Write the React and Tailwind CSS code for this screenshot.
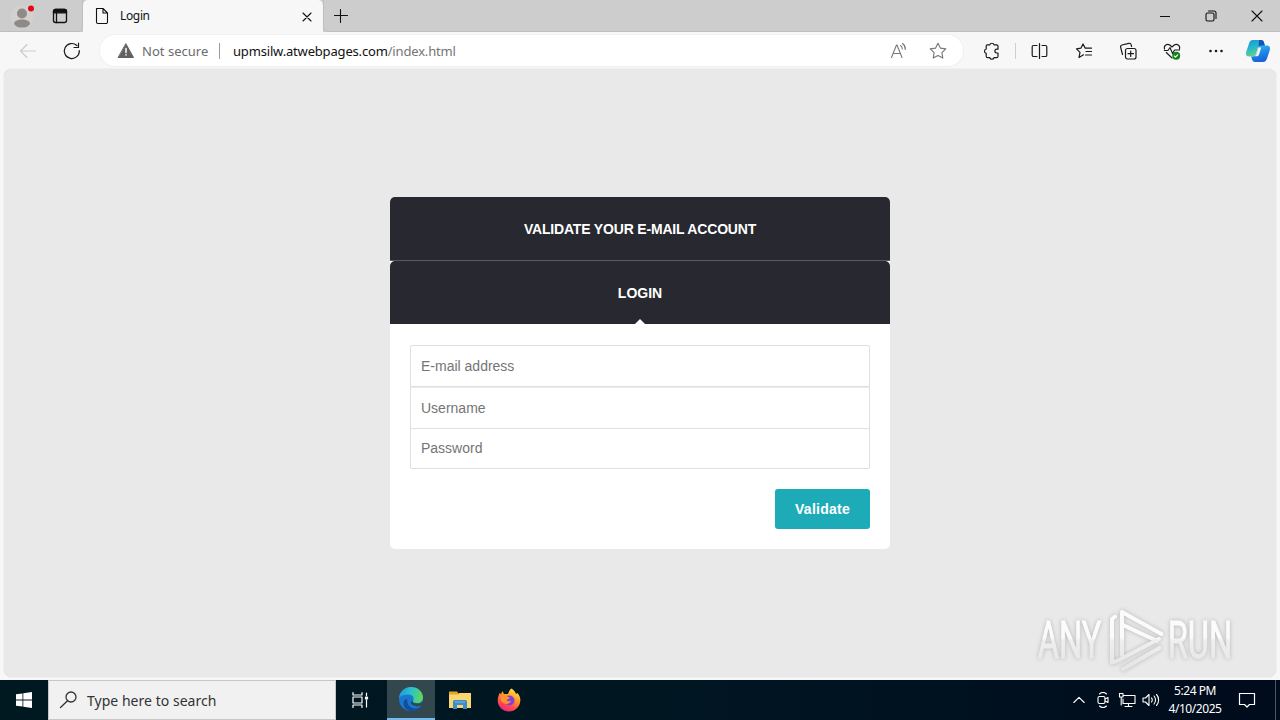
const Icon = ({ size = 20, box = 20, sw = 1.1, className = '', children }) => (
  <svg
    width={size}
    height={size}
    viewBox={`0 0 ${box} ${box}`}
    fill="none"
    stroke="currentColor"
    strokeWidth={sw}
    strokeLinecap="round"
    strokeLinejoin="round"
    className={`shrink-0 ${className}`}
  >
    {children}
  </svg>
);

const TabBar = () => (
  <div className="flex h-8 bg-[#cdcdcd] text-[#111]">
    <div className="flex w-[83px] items-center rounded-br-[5px] border-r border-b border-[#bebebe] pl-[10px]">
      <Icon size={26} box={26}>
        <circle cx="12" cy="14" r="11.5" fill="#d3d0ce" stroke="none" />
        <circle cx="12" cy="10.500" r="5" fill="#8d8a88" stroke="none" />
        <path d="M4 21c0-3 3.500-4.500 8-4.500s8 1.500 8 4.500c-2 3-4.500 3.500-8 3.500s-6-.5-8-3.500z" fill="#8d8a88" stroke="none" />
        <circle cx="21" cy="5.500" r="3" fill="#e30613" stroke="none" />
      </Icon>
      <Icon className="ml-[14px]" sw={1.3}>
        <rect x="3.500" y="3.500" width="13" height="13" rx="2" />
        <path d="M3.500 5.500a2 2 0 0 1 2-2h9a2 2 0 0 1 2 2v1.300h-13z" fill="currentColor" />
        <path d="M6.500 7v9.500" />
      </Icon>
    </div>
    <div className="flex w-60 items-center rounded-t-[5px] bg-[#f7f7f7] pl-[9px]">
      <Icon size={20}>
        <path d="M4.500 2.500h6.500l4.500 4.500v9a1.500 1.500 0 0 1-1.500 1.500H6A1.500 1.500 0 0 1 4.500 16zM11 2.500V7h4.500" />
      </Icon>
      <span className="ml-2 text-[12px] leading-4 tracking-[-0.350px]">Login</span>
      <Icon size={10} box={10} className="mt-px mr-[11px] ml-auto">
        <path d="M1 1l8 8M9 1L1 9" />
      </Icon>
    </div>
    <div className="flex flex-1 items-center rounded-bl-[5px] border-b border-l border-[#bebebe] pl-[10px]">
      <Icon size={14} box={14}>
        <path d="M6.500 .5v13M.5 6.500h13" />
      </Icon>
      <div className="ml-auto flex">
        <div className="flex w-[46px] items-center justify-center">
          <Icon size={10} box={10}>
            <path d="M0 5.500h10" />
          </Icon>
        </div>
        <div className="flex w-[46px] items-center justify-center">
          <Icon size={12} box={12}>
            <rect x="1" y="3" width="8" height="8" rx="1.500" />
            <path d="M3.500 1h5.500a2 2 0 0 1 2 2v5.500" />
          </Icon>
        </div>
        <div className="flex w-[46px] items-center justify-center">
          <Icon size={12} box={12}>
            <path d="M1 1l10 10M11 1L1 11" />
          </Icon>
        </div>
      </div>
    </div>
  </div>
);

const CopilotLogo = () => (
  <svg width="26" height="24" viewBox="0 0 26 24" className="shrink-0">
    <defs>
      <linearGradient id="cpA" x1="0" y1="0" x2="0.400" y2="1">
        <stop offset="0" stopColor="#1b8fd8" />
        <stop offset="0.500" stopColor="#25b8ca" />
        <stop offset="1" stopColor="#6bd08c" />
      </linearGradient>
      <linearGradient id="cpB" x1="0" y1="0" x2="0.300" y2="1">
        <stop offset="0" stopColor="#35c4f2" />
        <stop offset="0.500" stopColor="#1f8ce8" />
        <stop offset="1" stopColor="#1764dc" />
      </linearGradient>
    </defs>
    <path d="M8 1h8c2 0 2.600 1.200 3.200 3.200L20 7h-4c-2 0-2.800.8-3.400 2.800L11 15c-.6 1.600-1.600 2.500-3.500 2.500H4C1.500 17.500.5 16 1.200 13L4 4.500C4.800 2 6 1 8 1z" fill="url(#cpA)" />
    <path d="M18 23h-8c-2 0-2.600-1.200-3.200-3.200L6.200 17.500H8c2 0 3-1 3.500-2.700L13.200 9c.6-1.600 1.600-2.500 3.300-2.500H22c2.500 0 3.500 1.500 2.800 4.500L22 19.500c-.8 2.500-2 3.500-4 3.500z" fill="url(#cpB)" />
    <path d="M14 1h2c2 0 2.600 1.200 3.200 3.200l.7 2.300h-3.400c-1.700 0-2.500.8-3 2z" fill="#1557b8" />
    <path d="M13.500 8.500h2.700l-2 6.500c-.5 1.700-1 2.300-3 2.300H9.800c1-.5 1.500-1.500 1.900-2.800z" fill="#f7f7f7" />
  </svg>
);

const Toolbar = () => (
  <div className="flex h-[37px] items-center bg-[#f7f7f7] pl-[18px] text-[#1a1a1a]">
    <Icon className="text-[#cbcbcb]">
      <path d="M2.500 10h15M9 3.500L2.500 10 9 16.500" />
    </Icon>
    <Icon className="ml-6" sw={1.2}>
      <path d="M17.300 9.500a7.500 7.500 0 1 1-2.400-5M16.500 2v4.500H12" />
    </Icon>
    <div className="ml-[18px] flex h-[31px] w-[863px] items-center rounded-full bg-white pl-[17px] shadow-[0_0_0_1px_#f0f0f0]">
      <Icon size={18} box={18} sw={1}>
        <path d="M9 2l7.500 13.500h-15z" fill="#616161" stroke="#616161" />
        <path d="M9 6.500v4M9 12.700v.3" stroke="#fff" strokeWidth="1.500" />
      </Icon>
      <span className="mt-0.5 ml-[7px] w-[77px] text-[13px] tracking-[0.020px] whitespace-nowrap text-[#6b6b6b]">Not secure</span>
      <span className="h-4 w-px bg-[#9a9a9a]" />
      <span className="mt-0.5 ml-[13px] text-[13px] tracking-[-0.170px] whitespace-nowrap text-[#111]">
        upmsilw.atwebpages.com<span className="text-[#757575]">/index.html</span>
      </span>
      <Icon className="mr-px ml-auto text-[#7a7a7a]">
        <path d="M3.500 16.500L8.500 4h.5l5 12.500M5.300 12.500h7M12.500 4.500c1.200.8 1.800 2 1.800 3.500M14.500 2.500c2 1.500 3 3.500 2.800 6" />
      </Icon>
      <Icon className="mr-[15px] ml-[19px] text-[#777]">
        <path d="M10 2.200l2.400 4.900 5.400.8-3.900 3.800.9 5.400-4.800-2.600-4.800 2.600.9-5.400-3.900-3.800 5.400-.8z" />
      </Icon>
    </div>
    <Icon className="ml-[19px]" sw={1.2}>
      <path d="M5.200 3.800h2.600a2.200 2.200 0 0 1 4.200 0h2.500a1.500 1.500 0 0 1 1.500 1.500v2.900h-1.200a1.900 1.900 0 0 0 0 3.800h1.200v3.200a1.500 1.500 0 0 1-1.500 1.500h-2.500a2.200 2.200 0 0 1-4.200 0H5.700a1.500 1.500 0 0 1-1.500-1.500v-2.900a2.200 2.200 0 0 1 0-4.300V5.300a1.500 1.500 0 0 1 1-1.500z" />
    </Icon>
    <span className="ml-[13px] h-4 w-px bg-[#cfcfcf]" />
    <Icon className="ml-[14px]" sw={1.2}>
      <path d="M7 4.500H3.500A1.300 1.300 0 0 0 2.200 5.800v8.400A1.300 1.300 0 0 0 3.500 15.500H7M12 4.500h3.500a1.300 1.300 0 0 1 1.300 1.300v8.400a1.300 1.300 0 0 1-1.300 1.300H12M9.500 2.500v15" />
    </Icon>
    <Icon className="ml-[24px]" sw={1.2}>
      <path d="M9.500 13.800L5 16.500l1-5.200L2.500 7.800l4.500-.7L9 3l2.200 4.100h6.300M12 10.500h5.500M11.500 14h6" />
    </Icon>
    <Icon className="ml-6" sw={1.2}>
      <path d="M4.500 13.500L2.600 6.200a1.800 1.800 0 0 1 1.300-2.200l7-1.700a1.800 1.800 0 0 1 2.200 1.400l.5 1.800" />
      <rect x="7.500" y="7.500" width="10.500" height="10.500" rx="2" />
      <path d="M12.700 10v5.500M10 12.700h5.500" />
    </Icon>
    <Icon className="ml-6" sw={1.1}>
      <path d="M2.500 8C1.500 4.500 5 2.300 7.800 4L10 6l2.200-2C15 2.300 18.500 4.500 17.500 8M2.300 9.500H6l2-3 2.500 6 2-3.500h5M4.300 11.500L10 17" />
      <circle cx="14.200" cy="14.800" r="4" fill="#16811b" stroke="none" />
      <path d="M12.300 15l1.200 1.200 2.200-2.400" stroke="#fff" />
    </Icon>
    <Icon className="ml-6">
      <g fill="currentColor" stroke="none">
        <circle cx="4.500" cy="10" r="1.300" />
        <circle cx="10" cy="10" r="1.300" />
        <circle cx="15.500" cy="10" r="1.300" />
      </g>
    </Icon>
    <div className="ml-[19px]">
      <CopilotLogo />
    </div>
  </div>
);

const fields = ['E-mail address', 'Username', 'Password'];

const LoginCard = () => (
  <div className="mt-[127.500px] h-[352.500px] w-[500px] overflow-hidden rounded-[5px] bg-white font-['Liberation_Sans',Arial,sans-serif]">
    <div className="flex h-16 items-center justify-center border-b border-[#5b5c61] bg-[#282830] pt-0.5 text-[14px] font-bold tracking-[-0.180px] text-white">
      VALIDATE YOUR E-MAIL ACCOUNT
    </div>
    <div className="relative flex h-[63.500px] items-center justify-center rounded-t-[5px] bg-[#282830] pt-0.5 text-[14px] font-bold text-white">
      LOGIN
      <span className="absolute -bottom-px left-1/2 -translate-x-1/2 border-x-[6px] border-b-[6px] border-x-transparent border-b-white" />
    </div>
    <form className="flex flex-col px-5 pt-[20.500px]">
      {fields.map((name, i) => (
        <input
          key={name}
          type="text"
          placeholder={name}
          className={`w-full border border-[#dfdfdf] bg-white px-[10px] text-[14px] placeholder:text-[#757575] ${
            i === 0 ? 'h-[42px] rounded-t-[2px]' : i === 1 ? 'h-[42px] border-t-[#ececec]' : '-mt-px h-[41px] rounded-b-[2px]'
          }`}
        />
      ))}
      <button
        type="button"
        className="mt-5 h-10 w-[95px] self-end rounded-[3px] bg-[#1eabb8] pt-0.5 text-[14px] font-bold tracking-[0.250px] text-white"
      >
        Validate
      </button>
    </form>
  </div>
);

const Watermark = () => (
  <svg
    width="230"
    height="76"
    viewBox="0 0 230 76"
    className="absolute right-[14px] bottom-0 drop-shadow-[0_0_2px_rgba(0,0,0,0.22)]"
  >
    <defs>
      <linearGradient id="wm" x1="0" y1="0" x2="0" y2="76" gradientUnits="userSpaceOnUse">
        <stop offset="0.480" stopColor="#fbfbfb" />
        <stop offset="0.520" stopColor="#efefef" />
        <stop offset="0.850" stopColor="#e6e6e6" />
      </linearGradient>
    </defs>
    <g transform="scale(0.640 1)" fill="url(#wm)" stroke="url(#wm)" strokeWidth="0.800" fontFamily="Roboto, sans-serif" fontSize="51">
      <text x="9" y="57">ANY</text>
      <text x="212" y="57">RUN</text>
    </g>
    <g fill="none" stroke="url(#wm)" strokeWidth="4" strokeLinejoin="round" strokeLinecap="round">
      <path d="M83 15.500l-3 2.500v43.500l5-1.500L127 38" />
      <path d="M90 54V11l39.500 22M91 24l34 16" />
      <path d="M91 68l36.500-21" />
    </g>
  </svg>
);

const WindowsLogo = () => (
  <svg width="16" height="16" viewBox="0 0 16 16" fill="#fff">
    <path d="M0 2.300L6.500 1.400v6.200H0zM7.300 1.300L16 0v7.600H7.300zM0 8.400h6.500v6.200L0 13.700zM7.300 8.400H16V16l-8.700-1.300z" />
  </svg>
);

const EdgeLogo = () => (
  <svg width="26" height="26" viewBox="0 0 26 26">
    <defs>
      <linearGradient id="edA" x1="0" y1="0.300" x2="1" y2="0.500">
        <stop offset="0" stopColor="#2297dd" />
        <stop offset="0.500" stopColor="#2cc3c8" />
        <stop offset="1" stopColor="#61d956" />
      </linearGradient>
    </defs>
    <circle cx="13" cy="13" r="12" fill="#1878cf" />
    <path d="M1 12C2 5 7 1 13 1c7 0 12 5 12 10.500 0 3.500-2.500 5.500-6 5.500-3 0-4.500-1-4-2 1.500-2 .5-6.500-4.500-6.500-4 0-8 1-9.500 3.500z" fill="url(#edA)" />
    <path d="M9.500 13c-1.500 5 3 9.500 7.500 9.500 3 0 5-1 6.500-3-2 4-6 5.500-10.500 5.500-5-.5-8-5-7.500-8.500.3-2 2-3.500 4-3.500z" fill="#114e9c" />
    <path d="M14.700 15c-.6 1 1.300 2.600 4.300 2.600 2.600 0 4.300-.7 5.500-2.200l1 2.200c-3 4-10.500 3.400-12.500 0-.8-1.500.5-2.600 1.700-2.600z" fill="#33474f" />
  </svg>
);

const FolderLogo = () => (
  <svg width="22" height="20" viewBox="0 0 22 20">
    <path d="M0 1.500h8l1.500 2H22V18H0z" fill="#e7a52c" />
    <path d="M0 4.500h9l1.500-1.500H22v15H0z" fill="#fbd66f" />
    <path d="M4 19v-7.500a1.500 1.500 0 0 1 1.500-1.500h11a1.500 1.500 0 0 1 1.500 1.500V19h-4v-4H8v4z" fill="#3b8ecb" />
    <path d="M6 12h10" stroke="#79b9e4" />
  </svg>
);

const FirefoxLogo = () => (
  <svg width="24" height="24" viewBox="0 0 24 24">
    <defs>
      <linearGradient id="ff" x1="0.800" y1="0" x2="0.300" y2="1">
        <stop offset="0" stopColor="#fff04a" />
        <stop offset="0.400" stopColor="#ff9a25" />
        <stop offset="0.750" stopColor="#ff4650" />
        <stop offset="1" stopColor="#e52585" />
      </linearGradient>
    </defs>
    <path d="M14.500.5c3 2 4 4 4.500 5.500l1.500-1C23 8 23.500 10.500 23.300 13c-.5 6-5.500 10.500-11.300 10.500S.7 19 .7 12.500c0-3.500 1.300-6 2.300-8l.8 2L5.500 3l1.500 3h4c1-3 2-4.500 3.500-5.500z" fill="url(#ff)" />
    <circle cx="12.500" cy="12.500" r="5" fill="#8240d8" />
    <path d="M4 8c3-2 5.500-1 7 1l2 .5c-.6 1.500-2.500 1.500-3.500 2.500 1 1.500 3 1.500 4.500.5-.5 3-4.500 4.500-7.500 2.500S3.500 10.500 4 8z" fill="#ff922c" />
  </svg>
);

const Taskbar = () => (
  <div className="flex h-10 bg-linear-to-r from-[#001820] via-[#001722] to-[#000b1c] text-white">
    <div className="flex w-12 items-center justify-center">
      <WindowsLogo />
    </div>
    <div className="flex w-72 items-center border border-[#c6c6c6] bg-[#f1f1f1] pl-[10px] text-[#333]">
      <Icon size={20} sw={1.3}>
        <circle cx="12" cy="7" r="5" />
        <path d="M8.500 10.700L1.500 17.500" />
      </Icon>
      <span className="ml-2 text-[14px] tracking-[0.030px] whitespace-nowrap">Type here to search</span>
    </div>
    <div className="flex w-[51px] items-center justify-center">
      <Icon size={20} sw={1.2} className="-ml-[3px]">
        <path d="M3 2.500V5h9V2.500M3 17.500V15h9v2.500M16.500 3v2.500M16.500 10v7" />
        <rect x="3" y="7" width="9" height="6" />
        <rect x="15.500" y="7" width="2" height="2" fill="currentColor" />
      </Icon>
    </div>
    <div className="flex w-12 items-center justify-center border-b-2 border-[#76b9ed] bg-[#33474f]">
      <EdgeLogo />
    </div>
    <div className="flex w-[50px] items-center justify-center">
      <FolderLogo />
    </div>
    <div className="flex w-12 items-center justify-center">
      <FirefoxLogo />
    </div>
    <div className="ml-auto flex items-center">
      <Icon size={12} box={12}>
        <path d="M.8 8.500L6 3.300l5.200 5.200" />
      </Icon>
      <Icon size={16} box={16} className="ml-[10px]">
        <rect x="3" y="4.500" width="7" height="7" rx="1.500" />
        <path d="M10 7l3-1.500v5L10 9M4.500 2C6.500.2 9.500.2 11.500 2M4.500 14c2 1.800 5 1.800 7 0" />
      </Icon>
      <Icon size={18} box={18} className="ml-[7px]">
        <path d="M6 4.500h11v8H5V8M10.500 12.500v3M7 15.500h7M1.500 2.500H5v3.500H1.500zM3.200 6v8" />
      </Icon>
      <Icon size={18} box={18} className="ml-[6px]">
        <path d="M1 7h2.500L7 3.500v11L3.500 11H1zM9.500 7c1 1 1 3 0 4M12 5c2 2.200 2 5.800 0 8M14.500 3.500c2.800 3 2.800 8 0 11" />
      </Icon>
      <div className="ml-[7px] w-14 text-center text-[12px] leading-[18px] tracking-[-0.450px] whitespace-nowrap">
        <div>5:24 PM</div>
        <div>4/10/2025</div>
      </div>
      <Icon size={18} box={18} className="ml-[15px]" sw={1.2}>
        <path d="M1.500 2.500h15v11h-5L9 16l-2.500-2.500h-5z" />
      </Icon>
      <span className="ml-[19px] h-10 w-px bg-[#4b5664]" />
      <span className="w-1" />
    </div>
  </div>
);

export default function App() {
  return (
    <div className="flex h-[720px] w-[1280px] flex-col overflow-hidden bg-[#f7f7f7] font-['Noto_Sans','Segoe_UI',sans-serif]">
      <TabBar />
      <Toolbar />
      <main className="relative mx-1 mb-[3px] flex flex-1 items-start justify-center rounded-lg bg-[#e9e9e9] shadow-[0_0_1px_#bbb]">
        <LoginCard />
        <Watermark />
      </main>
      <Taskbar />
    </div>
  );
}
